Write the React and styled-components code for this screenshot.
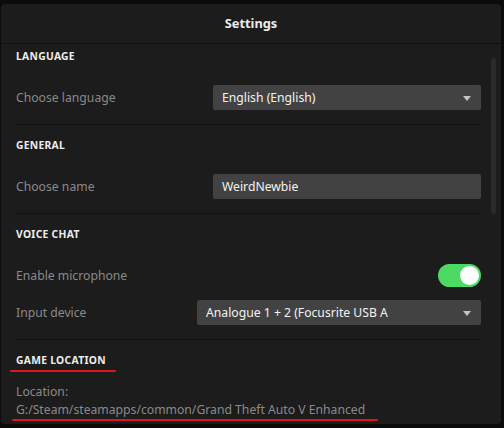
import React, { useState } from "react";
import styled, { createGlobalStyle } from "styled-components";

const GlobalStyle = createGlobalStyle`
  html, body {
    margin: 0;
    padding: 0;
    background: #0b0b0b;
  }
  body {
    font-family: "Noto Sans", "Open Sans", sans-serif;
    -webkit-font-smoothing: antialiased;
  }
  * { box-sizing: border-box; }
`;

const Screen = styled.div`
  width: 504px;
  height: 428px;
  padding: 4px 3px 4px 1px;
  background: #0b0b0b;
`;

const Panel = styled.div`
  height: 420px;
  background: #1c1c1c;
  border-radius: 4px;
  display: flex;
  flex-direction: column;
  overflow: hidden;
`;

const Header = styled.div`
  height: 40px;
  flex: none;
  display: flex;
  align-items: center;
  justify-content: center;
  border-bottom: 1px solid #111111;
  color: #ececec;
  font-size: 12.8px;
  font-weight: 700;
  padding-bottom: 1px;
`;

const Body = styled.div`
  flex: 1;
  min-height: 0;
  display: flex;
`;

const Content = styled.div`
  flex: 1;
  min-width: 0;
  padding-left: 15px;
  overflow: hidden;
`;

const Gutter = styled.div`
  width: 20px;
  flex: none;
  padding: 14px 0 0 10px;
`;

const Thumb = styled.div`
  width: 5px;
  height: 156px;
  border-radius: 3px;
  background: #2a2a2a;
`;

const Section = styled.section`
  padding: 13px 0 14px;
  border-bottom: 1px solid ${(p) => (p.$last ? "transparent" : "#121212")};
  &:first-child { padding-top: 5px; }
`;

const Heading = styled.h3`
  margin: 0 0 22px;
  height: 14px;
  line-height: 14px;
  font-size: 10.3px;
  font-weight: 700;
  letter-spacing: 0.3px;
  text-transform: uppercase;
  color: #eeeeee;
`;

const Marked = styled.span`
  position: relative;
  display: inline-block;
  &::after {
    content: "";
    position: absolute;
    left: ${(p) => p.$left}px;
    right: ${(p) => p.$right}px;
    bottom: ${(p) => p.$bottom}px;
    height: 2.5px;
    border-radius: 2px;
    background: #e0161b;
  }
`;

const Rows = styled.div`
  display: flex;
  flex-direction: column;
  gap: 12px;
`;

const Row = styled.div`
  height: 25px;
  display: flex;
  align-items: center;
  justify-content: space-between;
`;

const Label = styled.span`
  font-size: 12.2px;
  color: #8a8a8a;
  margin-top: -1px;
`;

const Field = styled.div`
  width: ${(p) => p.$width}px;
  height: 25px;
  border-radius: 2px;
  background: #424242;
  display: flex;
  align-items: center;
  justify-content: space-between;
  padding: 0 10px 0 9px;
  font-size: 12.2px;
  color: #f2f2f2;
  white-space: nowrap;
`;

const Caret = styled.span`
  width: 0;
  height: 0;
  border-left: 4.5px solid transparent;
  border-right: 4.5px solid transparent;
  border-top: 5px solid #c4c4c4;
  margin-top: 1px;
`;

const Toggle = styled.button`
  width: 43px;
  height: 23px;
  border: none;
  padding: 2px;
  border-radius: 12px;
  background: ${(p) => (p.$on ? "#4cd964" : "#555")};
  display: flex;
  justify-content: ${(p) => (p.$on ? "flex-end" : "flex-start")};
  cursor: pointer;
`;

const Knob = styled.span`
  width: 19px;
  height: 19px;
  border-radius: 50%;
  background: #ffffff;
`;

const PathBlock = styled.div`
  margin-top: -6px;
  font-size: 12.2px;
  line-height: 18px;
  color: #8a8a8a;
`;

function Select({ width, value }) {
  return (
    <Field $width={width}>
      <span>{value}</span>
      <Caret />
    </Field>
  );
}

export default function App() {
  const [mic, setMic] = useState(true);
  return (
    <>
      <GlobalStyle />
      <Screen>
        <Panel>
          <Header>Settings</Header>
          <Body>
            <Content>
              <Section>
                <Heading>Language</Heading>
                <Rows>
                  <Row>
                    <Label>Choose language</Label>
                    <Select width={268} value="English (English)" />
                  </Row>
                </Rows>
              </Section>
              <Section>
                <Heading>General</Heading>
                <Rows>
                  <Row>
                    <Label>Choose name</Label>
                    <Field $width={268}>WeirdNewbie</Field>
                  </Row>
                </Rows>
              </Section>
              <Section>
                <Heading>Voice chat</Heading>
                <Rows>
                  <Row>
                    <Label>Enable microphone</Label>
                    <Toggle $on={mic} onClick={() => setMic(!mic)}>
                      <Knob />
                    </Toggle>
                  </Row>
                  <Row>
                    <Label>Input device</Label>
                    <Select width={284} value="Analogue 1 + 2 (Focusrite USB A" />
                  </Row>
                </Rows>
              </Section>
              <Section $last>
                <Heading>
                  <Marked $left={-6} $right={-10} $bottom={-5}>Game location</Marked>
                </Heading>
                <PathBlock>
                  Location:
                  <br />
                  <Marked $left={-4} $right={-13} $bottom={-2}>
                    G:/Steam/steamapps/common/Grand Theft Auto V Enhanced
                  </Marked>
                </PathBlock>
              </Section>
            </Content>
            <Gutter>
              <Thumb />
            </Gutter>
          </Body>
        </Panel>
      </Screen>
    </>
  );
}
